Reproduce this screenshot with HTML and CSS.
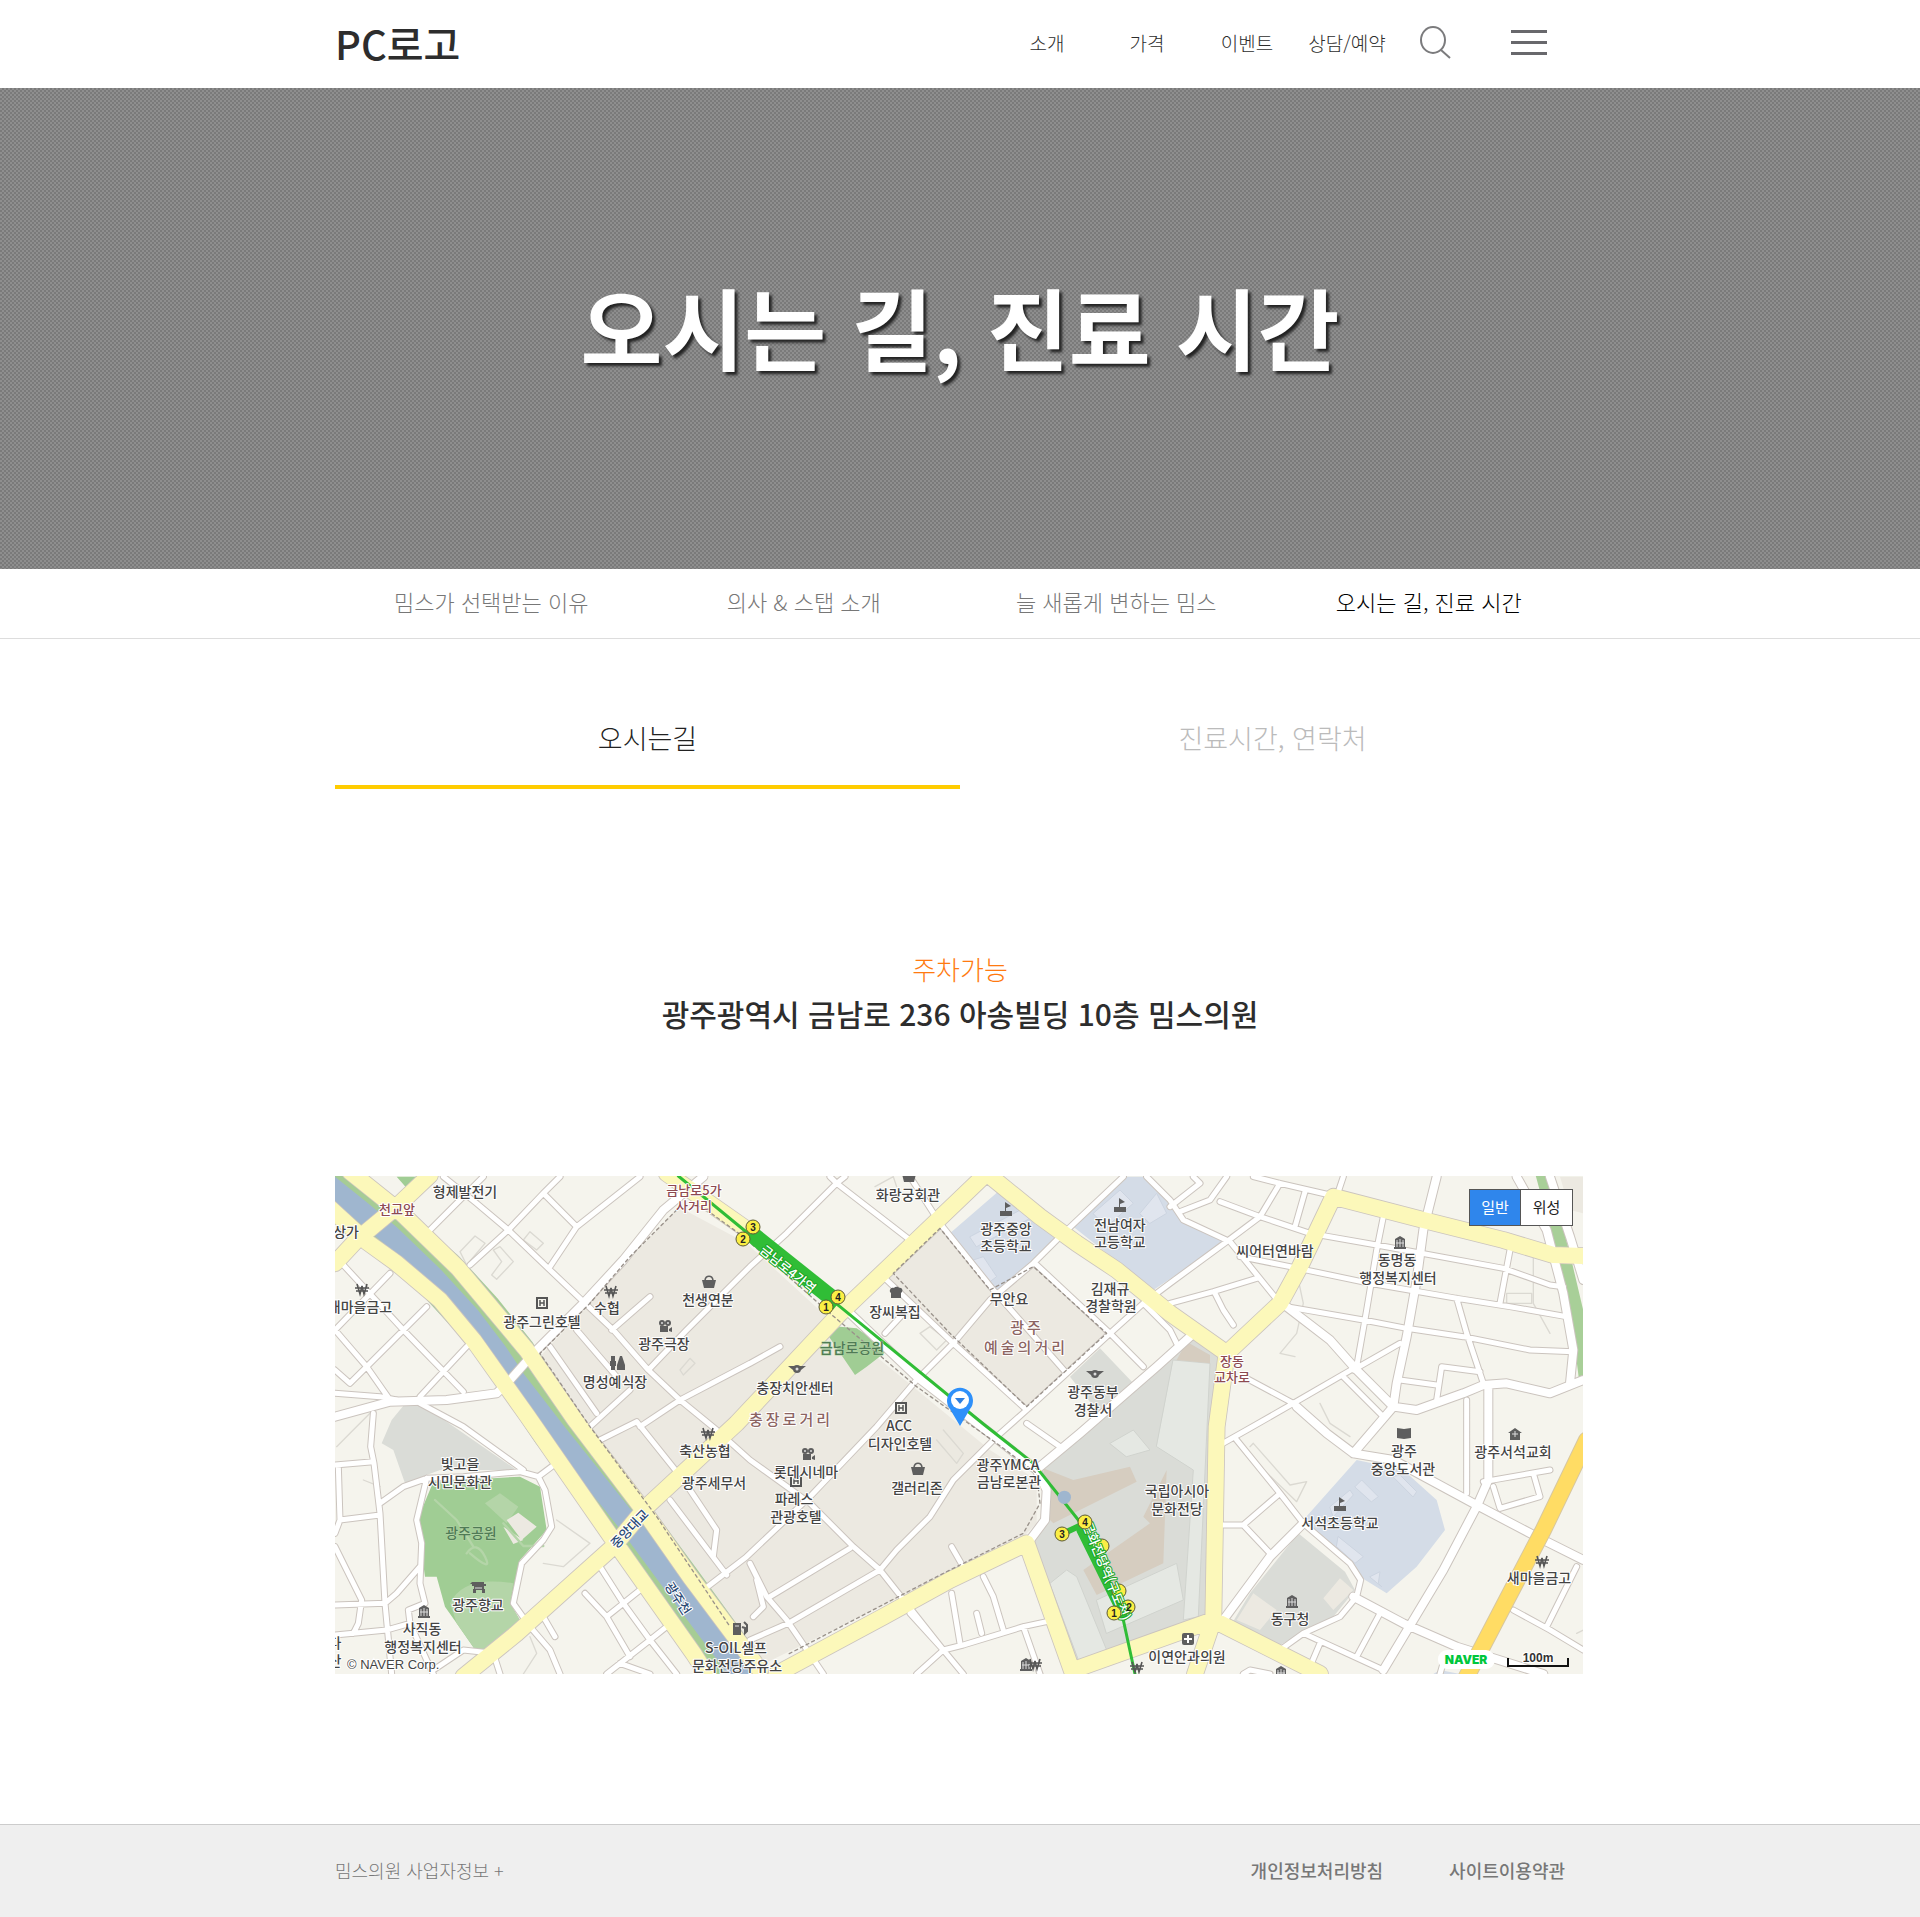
FILE: index.html
```html
<!DOCTYPE html>
<html lang="ko">
<head>
<meta charset="utf-8">
<meta name="viewport" content="width=device-width, initial-scale=1">
<title>오시는 길, 진료 시간</title>
<link rel="stylesheet" href="styles.css">
</head>
<body>
<header class="header">
  <div class="inner header-inner">
    <a class="logo" href="#">PC로고</a>
    <nav class="gnb">
      <a href="#">소개</a>
      <a href="#">가격</a>
      <a href="#">이벤트</a>
      <a href="#">상담/예약</a>
    </nav>
    <button class="icon-btn search" type="button" aria-label="검색">
      <svg width="32" height="34" viewBox="0 0 32 34" fill="none" stroke="#7b7b7d" stroke-width="2"><ellipse cx="14" cy="14" rx="12" ry="13"/><path d="M22 24L31 32"/></svg>
    </button>
    <button class="icon-btn menu" type="button" aria-label="메뉴">
      <svg width="36" height="26" viewBox="0 0 36 26" fill="#68686c"><path d="M0 0h36v3H0zM0 11h36v3H0zM0 22h36v3H0z"/></svg>
    </button>
  </div>
</header>

<section class="hero"><h1>오시는 길, 진료 시간</h1></section>

<nav class="subnav">
  <div class="inner subnav-inner">
    <a href="#">밈스가 선택받는 이유</a>
    <a href="#">의사 &amp; 스탭 소개</a>
    <a href="#">늘 새롭게 변하는 밈스</a>
    <a class="on" href="#">오시는 길, 진료 시간</a>
  </div>
</nav>

<main class="inner main">
  <div class="tabs">
    <button class="tab on" type="button">오시는길</button>
    <button class="tab" type="button">진료시간, 연락처</button>
  </div>
  <div class="address">
    <p class="parking">주차가능</p>
    <h2>광주광역시 금남로 236 아송빌딩 10층 밈스의원</h2>
  </div>

  <div class="map">
    <svg class="map-canvas" viewBox="0 0 1248 498" role="img" aria-label="밈스의원 주변 지도">
      <defs>
        <path id="minor" d="M300 180L380 100L460 20M340 20L440 100L535 180L660 300L760 395L850 480L955 600L1050 690L1160 780L1260 870L1440 1000L1570 1130L1650 1200L1840 1440L1900 1512M420 285L535 180L640 70L690 20M640 70L740 170L660 290M740 170L930 20M960 380L845 480M955 600L1070 480L1260 290L1370 190L1520 40L1740 210M1500 20L1520 40L1545 20M740 480L860 620M660 530L800 730M780 770L900 660M930 770L1050 690L1260 580L1350 530M15 480L110 590L180 690M40 285L220 480L400 665M180 310L15 480M290 410L110 590L60 640L15 600M410 530L270 680M15 670L150 680L200 690M270 700L400 770L580 900M130 730L122 830L132 880L150 1030L165 1300L185 1512M15 885L130 875M25 890L30 1050L15 1090M30 1050L150 1035M15 1130L50 1200L95 1290L85 1360L70 1390M15 1305L165 1300L200 1270L270 1190M150 1000L220 950L290 925L400 920L570 905L625 920L645 960L665 1070L640 1110L575 1180L550 1300L600 1370L660 1440L690 1512M290 925L260 1050L275 1120L270 1240L285 1300L235 1320L240 1360L290 1470L310 1512M15 1395L170 1380L240 1360M625 920L665 890M640 1340L675 1400M310 1500L400 1440L490 1450L510 1512M810 1190L880 1300L960 1410L1040 1512M765 1270L830 1340L900 1460M830 1340L930 1260M830 1512L960 1410L1010 1370M870 1480L960 1512M810 810L920 755L1060 930L1160 1080L1150 1160M1020 990L1190 1215M1120 1260L1250 1160L1440 980L1640 770L1760 630L1870 520L1980 390L2110 280L2190 200L2380 20M1320 1280L1560 1135M1260 1410L1375 1360L1650 1200L1700 1140L1800 1040L1870 930L2000 800L2090 720L2210 610L2340 490L2440 400L2520 340L2690 215L2790 140L2850 40M1260 1180L1310 1280L1370 1350L1480 1512M1280 1230L1300 1310L1270 1340M1865 1130L1905 1200M1960 1220L1990 1280L2020 1380M1865 1270L1890 1420M1940 1330L1955 1390M1760 1512L1840 1440L1900 1425L2080 1370L2150 1355M2080 1370L2130 1512M1740 1330L1840 1440M2090 760L2190 830M1665 490L1730 420M1670 330L1870 520L2090 720M1740 20L1830 160L1990 360L2210 610M2115 280L2340 490L2440 590M2440 400L2520 480L2540 520M2450 20L2520 90L2560 150L2700 215L2850 400M2590 20L2610 40L2520 110M2690 20L2640 90L2550 125M2770 20L2850 40L3000 75M3040 20L3020 80M2925 65L2895 170M2670 95L2790 140L2940 190L3140 225L3330 260L3520 295L3660 345L3700 350M2730 260L2880 290L3120 340L3380 385L3540 410L3710 440M2870 410L3100 450L3230 475L3400 500L3600 540L3730 545M3160 140L3140 240L3110 420L3080 590M3540 240L3510 400M3380 385L3410 490L3460 640M3320 690L3335 590L3450 605M3210 630L3320 645M3070 600L3210 520M3410 690L3410 970M3040 620L3160 740M2740 620L2890 700L2990 790M2670 825L2750 780L2890 700L3080 590M2520 400L2650 365L2780 325M2655 370L2680 420L2710 465M2720 810L2850 970L2920 1060L3060 1180L3092 1230L3080 1280L3030 1340L2920 1390L2850 1440M2665 1065L2740 1065L2850 970M2740 1065L2820 1150M3150 1330L3080 1460M2920 1390L3160 1500M2970 1420L2940 1490M3460 935L3660 900M3490 950L3510 1015L3630 980L3610 910M3550 1320L3660 1380L3760 1440M3650 1370L3740 1190M3330 1512L3345 1460M2740 1512L2760 1500L2820 1512"/>
        <path id="major" d="M540 630L620 540L760 400L880 270L1000 120L1120 20M15 740L180 695L350 690L500 670L540 630M1560 430L1760 620L1980 790L2120 900L2150 960L2145 1050L2100 1110M2130 890L2250 790L2480 590L2580 500M3320 20L3280 180L3260 330L3230 500L3200 640L3190 710M3475 650L3475 930L3440 1010L3340 1200L3160 1500M2870 410L3000 510L3080 600L3190 710L3260 720L3400 670L3460 645L3530 640L3660 670L3760 630M3190 710L3070 850M2900 710L2990 790L3070 850L3190 870L3430 1000L3620 1100L3760 1170M3560 20L3650 180L3700 370L3730 540L3720 640M3660 20L3720 200L3760 330M2920 1060L2820 1160L2680 1350M3070 1280L3220 1360L3380 1430L3640 1512"/>
        <path id="avenue" d="M-10 105L110 215L200 280L330 390L430 510L590 735L850 1110L1090 1450L1130 1512M60 5L210 125L385 295L590 540L735 750L940 1020L1080 1220L1230 1420L1290 1500M15 280L80 210L200 110L300 15M400 1520L560 1390L850 1130L950 1010L1220 760L1530 430L1740 230L1970 10L2130 140L2240 220L2360 300L2520 430L2690 550L2850 400L2910 290L3010 80L3280 150L3520 210L3670 255L3760 258M2690 550L2660 770L2650 1350L2595 1512M2230 1500L2510 1400L2650 1350L2970 1512M1340 1512L1660 1340L1860 1230L2090 1120L2225 1500M1010 10L1260 185"/>
        <g id="won" fill="none" stroke="#555" stroke-width="1.6"><path d="M-5 -5L-2 5L0 -3L2 5L5 -5M-7 -1H7M-6 2H6"/></g>
        <g id="hotel"><rect x="-5" y="-5" width="10" height="10" fill="#f5f4ed" stroke="#555" stroke-width="2"/><path d="M-2 -3V3M2 -3V3M-2 0H2" stroke="#555" stroke-width="1.5"/></g>
        <g id="school" fill="#5e5e5e"><path d="M-6 2H6V7H-6ZM-1 2V-7L5 -3L0 -1V2Z"/></g>
        <g id="office"><path d="M-5 -3L0 -6L5 -3V5H6V7H-6V5H-5Z" fill="#5e5e5e"/><path d="M-3 -2V5M0 -3V5M3 -2V5M-4 1H4" stroke="#ddd" stroke-width="1"/></g>
        <g id="bag"><path d="M-7 -2H7L5 6H-5Z" fill="#5e5e5e"/><path d="M-4 -2C-3 -7 3 -7 4 -2" fill="none" stroke="#5e5e5e" stroke-width="1.6"/></g>
        <g id="film" fill="#5e5e5e"><circle cx="-3" cy="-3" r="3"/><circle cx="3" cy="-3" r="3"/><circle cx="-3" cy="-3" r="1" fill="#ddd"/><circle cx="3" cy="-3" r="1" fill="#ddd"/><path d="M-5 0H3V6H-5ZM4 3L7 1V6L4 5Z"/></g>
        <g id="police" fill="#5e5e5e"><path d="M-9 -3H9L4 1H-4Z"/><circle r="4"/><circle r="1.5" fill="#ddd"/></g>
        <g id="chef" fill="#5e5e5e"><path d="M-6 -1C-7 -5 -3 -6 -2 -5C0 -7 3 -6 3 -5C6 -6 8 -2 5 0V5H-5V0Z"/></g>
      </defs>
      <rect width="1248" height="498" fill="#f5f4ed"/>
      <g transform="scale(.33333) translate(-15 -18)" stroke-linejoin="round" stroke-linecap="round">
        <path fill="#ece9e1" d="M1045 110L1250 220L1490 440L1700 610L1980 840L2120 930L2120 1060L2080 1100L1240 1512L630 560ZM1830 175L1980 365L2110 290L2340 490L2090 720L1670 320ZM3690 20H3760V130L3720 120Z"/>
        <path fill="#dadcd7" d="M230 695L185 750L155 820L190 840L225 940L330 900L560 900L270 700ZM2905 1090L3045 1205L3075 1260L3010 1340L2840 1430L2700 1370L2760 1270ZM2580 500L2680 560L2660 770L2640 1340L2250 1495L2100 1120L2140 1040L2140 900L2440 640ZM2220 620L2310 535L2420 650L2330 760Z"/>
        <path fill="#e5e8e3" d="M2530 570L2640 580L2605 1340L2560 1350L2590 900L2480 830ZM2160 1240L2210 1200L2240 1220L2330 1440L2250 1480ZM2340 820L2410 780L2460 840L2390 860ZM2300 1290L2540 1180L2560 1290L2330 1390Z" stroke="#d0d3ce" stroke-width="3"/>
        <path fill="#d6cdc0" d="M2140 895L2230 930L2400 890L2420 935L2170 1060L2150 1040ZM2260 1200L2460 1060L2440 1040L2510 900L2500 1180L2300 1275ZM2570 515L2640 555V580L2540 570Z"/>
        <path fill="#ece9e1" d="M2980 1285L3030 1225L3070 1260L3010 1320ZM2720 1350L2770 1270L2840 1320L2790 1380Z"/>
        <path fill="#d4dce7" d="M2010 60L1860 190L2000 360L2110 275L2190 190ZM2375 20L2230 170L2470 360L2690 215L2560 150L2450 20ZM3080 870L3220 900L3320 990L3345 1080L3260 1190L3170 1270L3090 1220L2920 1050ZM3310 1512L3330 1500L3390 1512Z"/>
        <path fill="#e0e5ee" stroke="#ccd4e0" stroke-width="3" d="M1920 200L2090 110L2110 140L1940 230ZM1930 270L1960 260L2000 320L1980 335ZM2290 130L2370 60L2410 100L2330 170ZM2430 130L2480 70L2510 130L2460 160ZM3075 950L3095 930L3145 980L3125 995ZM3025 1100L3100 1160L3075 1180L3020 1130ZM3000 1010L3060 960L3070 975L3010 1040ZM3190 920L3210 915L3260 965L3250 980ZM3120 1220L3150 1205L3145 1240L3155 1250Z"/>
        <path fill="#a0cd94" d="M310 935L570 920L630 950L650 1080L570 1170L540 1300L575 1360L450 1460L380 1360L345 1310L320 1220L285 1220L262 1050ZM1530 470L1580 475L1675 540L1610 590L1575 615L1490 490ZM200 20H260L235 60Z"/>
        <path fill="#b4d5a8" d="M360 1300Q400 1215 550 1240L540 1300L575 1360L450 1460L380 1360ZM465 1000L510 970L565 1010L530 1060Z"/>
        <path fill="#ece9e1" d="M530 1050L565 1028L620 1070L575 1110ZM520 1070L580 1110L550 1122Z"/>
        <path fill="none" stroke="#b4d5a8" stroke-width="7" d="M315 990L380 1050L430 1130M520 1060L580 1128H640M410 1150Q440 1110 465 1160T420 1150"/>
        <path fill="none" stroke="#a6cc95" stroke-width="160" d="M-10 30L90 110L180 190L330 315L440 435L540 560L680 770L780 900L900 1060L1040 1250L1200 1470L1240 1530"/>
        <path fill="none" stroke="#9fb6cf" stroke-width="62" d="M-10 40L90 120L180 195L310 320L420 440L500 545L560 635L680 790L780 915L900 1065L1040 1255L1200 1470L1230 1520"/>
        <path fill="none" stroke="#a8cf98" stroke-width="38" d="M3635 10L3700 250L3740 420L3765 620"/>
        <g fill="none" stroke="#dbd9d2" stroke-width="4"><path d="M390 245L435 198L465 220L410 285ZM580 210L600 185L640 220L620 240ZM490 240L510 230L550 275L500 328L485 315L515 275ZM1050 600L1080 565L1095 580L1060 615ZM1770 490L1800 470L1850 510L1820 540ZM1635 50L1690 20L1700 50M2895 560L2850 550L2900 490L2920 400L2905 330M2970 700L3000 760L3060 800M3610 240L3610 400L3660 490M3530 370H3605V400H3530ZM2760 830L2770 820L2880 945L2930 935L2900 995L2750 850M680 1050L780 1120L700 1190L640 1180M600 1400L620 1450L580 1512M100 930L150 950M3740 1390L3760 1380M20 830L60 790L150 700M1820 810L1880 880L1900 850L1840 780"/></g>
        <g fill="none" stroke="#cbc4be">
          <use href="#minor" stroke-width="21"/><use href="#major" stroke-width="30"/><use href="#avenue" stroke-width="53"/>
        </g>
        <g fill="none" stroke="#fff"><use href="#minor" stroke-width="15"/><use href="#major" stroke-width="24"/></g>
        <use href="#avenue" fill="none" stroke="#fcf8ba" stroke-width="48"/>
        <path fill="none" stroke="#d7c7a0" stroke-width="52" d="M3770 810L3640 1080L3530 1290L3410 1520"/>
        <path fill="none" stroke="#ffdc64" stroke-width="46" d="M3770 810L3640 1080L3530 1290L3410 1520"/>
        <path class="dash" d="M1130 120L1240 200L1500 430L1760 650L2000 820L2120 910L2130 1000L2080 1090L1830 1215L1370 1455M1040 120L900 260L780 400L630 550L780 770L980 1040L1200 1370M1830 175L1690 310L1860 490L2090 710L2330 490L2110 290L1980 360Z"/>
        <path fill="none" stroke="#30bd36" stroke-width="9" d="M1045 18L1260 195L1530 410L1960 762L2110 880L2245 1050L2320 1200L2380 1350L2415 1512"/>
        <path fill="none" stroke="#30bd36" stroke-width="50" stroke-linecap="butt" d="M1262 190L1525 400"/>
        <path fill="none" stroke="#30bd36" stroke-width="26" d="M2252 1080L2380 1340"/>
        <path fill="none" stroke="#30bd36" stroke-width="18" d="M2195 1093L2265 1060"/>
        <circle cx="2203" cy="982" r="20" fill="#9fb6cf"/>
      </g>
      <g class="exits">
        <circle cx="418" cy="51" r="7"/><circle cx="408" cy="63" r="7"/><circle cx="503" cy="121" r="7"/><circle cx="491" cy="131" r="7"/><circle cx="767" cy="370" r="7"/><circle cx="784" cy="415" r="7"/><circle cx="793" cy="431" r="7"/>
      </g>
      <g>
        <use href="#won" x="27" y="113"/><use href="#won" x="276" y="115"/><use href="#won" x="373" y="257"/><use href="#won" x="1207" y="385"/><use href="#won" x="802" y="491"/>
        <use href="#hotel" x="207" y="127"/><use href="#hotel" x="566" y="232"/><use href="#hotel" x="461" y="305"/>
        <use href="#school" x="671" y="33"/><use href="#school" x="785" y="29"/><use href="#school" x="1005" y="328"/>
        <use href="#office" x="1065" y="66"/><use href="#office" x="89" y="435"/><use href="#office" x="957" y="425"/><use href="#office" x="946" y="496"/><use href="#office" x="691" y="488"/><use href="#won" x="700" y="488"/>
        <use href="#bag" x="374" y="106"/><use href="#bag" x="583" y="293"/><use href="#bag" x="574" y="0"/>
        <use href="#film" x="330" y="150"/><use href="#film" x="473" y="278"/>
        <use href="#police" x="462" y="193"/><use href="#police" x="760" y="198"/>
        <use href="#chef" x="561" y="117"/>
        <path fill="#5e5e5e" d="M276 180h4v5h1v5h-1v4h-4v-4h-1v-5h1zM285 180h2l3 9v5h-8v-5zM137 406h12v2h2v2h-2v3h1v4h-3v-3h-6v3h-3v-4h1v-3h-2v-2h-2zM1062 252l7 1 7-1v10l-7 1-7-1zM1180 252l7 5h-2v7h-10v-7h-2zM398 447h8v12h-8z"/>
        <path fill="none" stroke="#ddd" d="M140 412h7M1180 255v6M1177 258h6M400 450h4"/><path fill="none" stroke="#5e5e5e" stroke-width="2" d="M407 451l3 1v5l2-2v-6l-3-3"/>
        <rect x="847" y="457" width="12" height="12" rx="2" fill="#5e5e5e"/><path d="M853 459v8M849 463h8" stroke="#fff" stroke-width="2"/>
      </g>
      <g class="labels">
        <text x="130" y="21">형제발전기</text><text x="11" y="61">상가</text><text x="25" y="136">새마을금고</text><text x="207" y="151">광주그린호텔</text><text x="272" y="137">수협</text><text x="373" y="129">천생연분</text><text x="329" y="173">광주극장</text><text x="280" y="211">명성예식장</text>
        <text x="573" y="24">화랑궁회관</text><text x="671" y="58">광주중앙</text><text x="671" y="75">초등학교</text><text x="785" y="54">전남여자</text><text x="785" y="71">고등학교</text><text x="775" y="118">김재규</text><text x="776" y="135">경찰학원</text><text x="674" y="128">무안요</text><text x="560" y="141">장씨복집</text><text x="460" y="217">충장치안센터</text>
        <text x="564" y="255">ACC</text><text x="565" y="273">디자인호텔</text><text x="471" y="301">롯데시네마</text><text x="459" y="328">파레스</text><text x="461" y="346">관광호텔</text><text x="582" y="317">갤러리존</text><text x="673" y="294">광주YMCA</text><text x="674" y="311">금남로본관</text><text x="842" y="320">국립아시아</text><text x="842" y="338">문화전당</text>
        <text x="370" y="280">축산농협</text><text x="379" y="312">광주세무서</text><text x="125" y="293">빛고을</text><text x="125" y="311">시민문화관</text><text x="143" y="434">광주향교</text><text x="87" y="458">사직동</text><text x="88" y="476">행정복지센터</text><text x="401" y="477">S-OIL셀프</text><text x="402" y="495">문화전당주유소</text><text x="0" y="472">다</text><text x="0" y="490">산</text>
        <text x="940" y="80">씨어터연바람</text><text x="1062" y="89">동명동</text><text x="1063" y="107">행정복지센터</text><text x="758" y="221">광주동부</text><text x="758" y="239">경찰서</text><text x="1069" y="280">광주</text><text x="1068" y="298">중앙도서관</text><text x="1178" y="281">광주서석교회</text><text x="1005" y="352">서석초등학교</text><text x="1204" y="407">새마을금고</text><text x="955" y="448">동구청</text><text x="852" y="486">이연안과의원</text>
        <g class="junction"><text x="62" y="38">천교앞</text><text x="359" y="19">금남로5가</text><text x="359" y="35">사거리</text><text x="897" y="190">장동</text><text x="897" y="206">교차로</text></g>
        <g class="district"><text x="692" y="157">광주</text><text x="691" y="177">예술의거리</text><text x="456" y="249">충장로거리</text></g>
        <g class="park"><text x="517" y="177">금남로공원</text><text x="136" y="362">광주공원</text></g>
        <g class="water"><text transform="translate(298 356) rotate(-46)">중앙대교</text><text transform="translate(339 425) rotate(57)">광주천</text></g>
        <g class="station"><text transform="translate(450 97) rotate(39)">금남로4가역</text><text transform="translate(767 397) rotate(68)">문화전당역(구도청)</text></g>
      </g>
      <g class="exits"><circle cx="750" cy="346" r="7"/><circle cx="727" cy="358" r="7"/><circle cx="779" cy="437" r="7"/></g>
      <g class="exit-no">
        <text x="418" y="55">3</text><text x="408" y="67">2</text><text x="503" y="125">4</text><text x="491" y="135">1</text><text x="750" y="350">4</text><text x="727" y="362">3</text><text x="794" y="435">2</text><text x="779" y="441">1</text>
      </g>
      <path d="M625 250L615 233A13 13 0 1 1 635 233Z" fill="#2e90fa"/><circle cx="625" cy="224" r="9" fill="#fff"/><path d="M620 222h10l-5 6z" fill="#2e7fe0"/>
      <rect x="1103" y="474" width="57" height="19" rx="9" fill="#fff"/>
      <text class="naver" x="1131" y="488">NAVER</text>
      <text class="copyright" x="12" y="493">© NAVER Corp.</text>
      <path d="M1173 482v8h60v-8" fill="none" stroke="#111" stroke-width="2"/><text class="scale" x="1203" y="486">100m</text>
    </svg>
    <div class="map-type"><button class="on" type="button">일반</button><button type="button">위성</button></div>
  </div>
</main>

<footer class="footer">
  <div class="inner footer-inner">
    <a href="#">밈스의원 사업자정보 +</a>
    <div class="policies"><a href="#">개인정보처리방침</a><a href="#">사이트이용약관</a></div>
  </div>
</footer>
</body>
</html>
```
FILE: styles.css
```css
* { box-sizing: border-box; }
body {
  margin: 0;
  background: #fff;
  color: #2d2d2d;
  font-family: "Noto Sans CJK KR", "Noto Sans", sans-serif;
  font-weight: 300;
}
a { color: inherit; text-decoration: none; }
button { font: inherit; color: inherit; background: none; border: 0; padding: 0; cursor: pointer; }
h1, h2, p { margin: 0; }
.inner { width: 100%; max-width: 1250px; margin: 0 auto; }

.header-inner { display: flex; align-items: center; height: 88px; padding-bottom: 2px; }
.logo { margin-right: auto; font-size: 40px; font-weight: 500; line-height: 84px; }
.gnb { display: grid; grid-template-columns: repeat(4, 100px); text-align: center; font-size: 19px; line-height: 28px; }
.icon-btn { display: flex; }
.search { margin: 0 60px 0 22px; }
.menu { margin-right: 38px; }

.hero {
  display: flex;
  align-items: center;
  justify-content: center;
  height: 481px;
  padding-bottom: 6px;
  background: #858585 conic-gradient(#7a7a7a 25%, #8e8e8e 0 50%, #7a7a7a 0 75%, #8e8e8e 0) 0 0 / 4px 4px;
}
.hero h1 { color: #fff; font-size: 89px; font-weight: 700; line-height: 132px; text-shadow: 3px 3px 3px #222; }

.subnav { border-bottom: 1px solid #ddd; }
.subnav-inner { display: grid; grid-template-columns: repeat(4, 1fr); padding-bottom: 4px; text-align: center; font-size: 22px; line-height: 65px; color: #777; }
.subnav .on { color: #000; }

.tabs { display: grid; grid-template-columns: 1fr 1fr; margin-top: 50px; }
.tab { height: 100px; border-bottom: 4px solid transparent; font-size: 27px; color: #bbb; }
.tab.on { color: #222; border-color: #fc0; }

.address { margin-top: 158px; text-align: center; }
.parking { color: #ff7a10; font-size: 26px; line-height: 44px; }
.address h2 { font-size: 30px; font-weight: 500; line-height: 44px; }

.map { position: relative; max-width: 1248px; margin: 141px 0 150px; }
.map-canvas { display: block; width: 100%; height: auto; }
.dash { fill: none; stroke: #99918a; stroke-width: 4; stroke-dasharray: 9 10; }
.labels { font-size: 14px; font-weight: 500; text-anchor: middle; fill: #444; stroke: #fff; stroke-width: 2px; stroke-linejoin: round; paint-order: stroke; }
.junction { font-size: 13px; fill: #8d4a50; }
.district { font-size: 15px; letter-spacing: 3px; fill: #8c6462; }
.park { fill: #4f7b55; stroke: #b4d5a8; stroke-width: 1px; }
.water { font-size: 13px; fill: #2c4a75; }
.station { font-size: 13px; fill: #fff; stroke: #18a526; }
.exits { fill: #fbee44; stroke: #5c5a35; stroke-width: 1px; }
.exit-no { font: 700 10px "Liberation Sans", sans-serif; text-anchor: middle; fill: #222; }
.naver { font: 900 12px Inter, sans-serif; text-anchor: middle; fill: #00c73c; }
.copyright { font: 13px "Liberation Sans", sans-serif; fill: #444; stroke: #fff; stroke-width: 2px; paint-order: stroke; }
.scale { font: 700 12px "Liberation Sans", sans-serif; text-anchor: middle; fill: #333; stroke: #fff; stroke-width: 2px; paint-order: stroke; }
.map-type { position: absolute; top: 13px; right: 10px; display: flex; border: 1px solid #555; background: #fff; }
.map-type button { width: 51px; height: 35px; padding-bottom: 2px; font-size: 15px; font-weight: 400; color: #222; }
.map-type .on { color: #fff; background: #2f86ec; border-right: 1px solid #555; }

.footer { border-top: 1px solid #ccc; background: #efefef; color: #777; font-size: 18px; }
.footer-inner { display: flex; justify-content: space-between; padding-bottom: 2px; line-height: 90px; }
.policies { display: flex; gap: 66px; padding-right: 20px; font-weight: 500; }
```
